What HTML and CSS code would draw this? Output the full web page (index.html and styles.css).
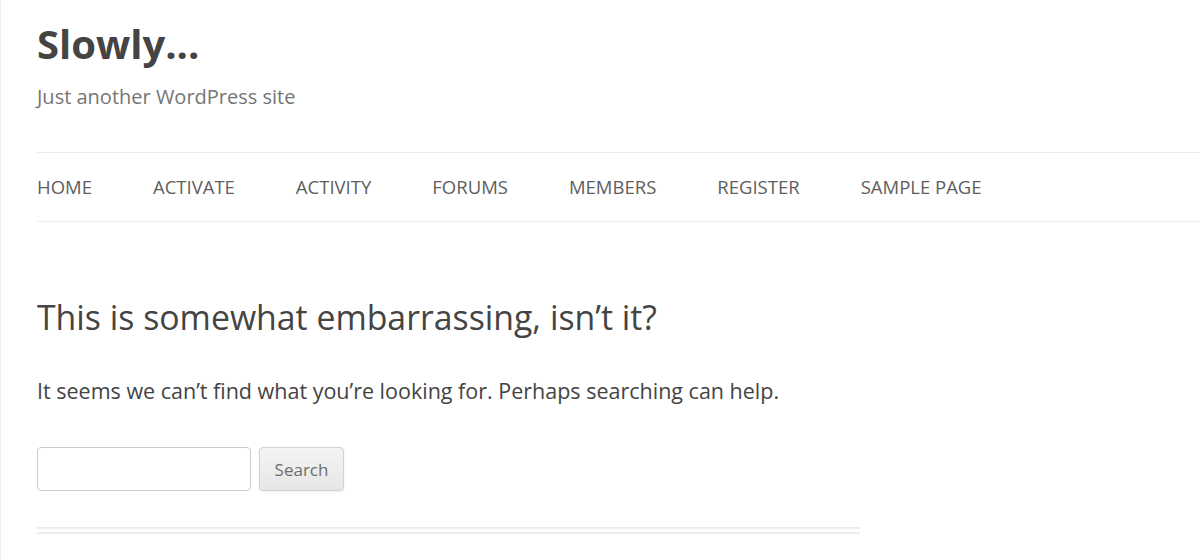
FILE: index.html
```html
<!DOCTYPE html>
<html>
<head>
<meta charset="utf-8">
<link rel="stylesheet" href="styles.css">
</head>
<body>
<div class="page">
  <header class="site-header">
    <h1 class="site-title">Slowly...</h1>
    <p class="site-description">Just another WordPress site</p>
    <nav class="main-nav">
      <a href="#">HOME</a>
      <a href="#">ACTIVATE</a>
      <a href="#">ACTIVITY</a>
      <a href="#">FORUMS</a>
      <a href="#">MEMBERS</a>
      <a href="#">REGISTER</a>
      <a href="#">SAMPLE PAGE</a>
    </nav>
  </header>
  <main class="content">
    <article class="error404">
      <h2 class="entry-title">This is somewhat embarrassing, isn’t it?</h2>
      <p class="entry-text">It seems we can’t find what you’re looking for. Perhaps searching can help.</p>
      <form class="search-form">
        <input type="text" class="search-field">
        <button type="button" class="search-btn">Search</button>
      </form>
    </article>
  </main>
</div>
</body>
</html>
```
FILE: styles.css
```css
html, body {
  margin: 0;
  padding: 0;
  background: #fff;
}
body {
  font-family: "Open Sans", "Liberation Sans", sans-serif;
  color: #444;
}
.page {
  border-left: 1px solid #ececec;
  padding-left: 36px;
  min-height: 560px;
  box-sizing: border-box;
}
.site-title {
  margin: 0;
  padding-top: 18px;
  font-size: 40px;
  line-height: 52px;
  font-weight: 700;
  color: #444;
}
.site-description {
  margin: 13px 0 0;
  font-size: 20px;
  line-height: 28px;
  font-weight: 400;
  color: #757575;
}
.main-nav {
  margin-top: 41px;
  border-top: 1px solid #ededed;
  border-bottom: 1px solid #ededed;
  height: 68px;
  display: flex;
  align-items: center;
  gap: 61px;
}
.main-nav a {
  font-size: 18.5px;
  line-height: 24px;
  color: #5e5e5e;
  text-decoration: none;
}
.content {
  width: 823px;
}
.error404 {
  padding-top: 73px;
  padding-bottom: 36px;
  border-bottom: 7px double #ededed;
}
.entry-title {
  margin: 0;
  font-size: 33.8px;
  line-height: 44px;
  font-weight: 400;
  color: #444;
}
.entry-text {
  margin: 36px 0 0;
  font-size: 21.5px;
  line-height: 32px;
  color: #444;
}
.search-form {
  margin-top: 40px;
  display: flex;
  gap: 8px;
}
.search-field {
  width: 214px;
  height: 44px;
  box-sizing: border-box;
  border: 1px solid #ccc;
  border-radius: 4px;
  padding: 8px 10px;
  font-family: inherit;
  font-size: 18px;
  background: #fff;
}
.search-btn {
  width: 85px;
  height: 44px;
  box-sizing: border-box;
  border: 1px solid #d2d2d2;
  border-radius: 4px;
  background: linear-gradient(to bottom, #f4f4f4, #e6e6e6);
  box-shadow: 0 1px 2px rgba(64,64,64,0.1);
  font-family: inherit;
  font-size: 17px;
  color: #6e6e6e;
  padding: 0;
}
```
